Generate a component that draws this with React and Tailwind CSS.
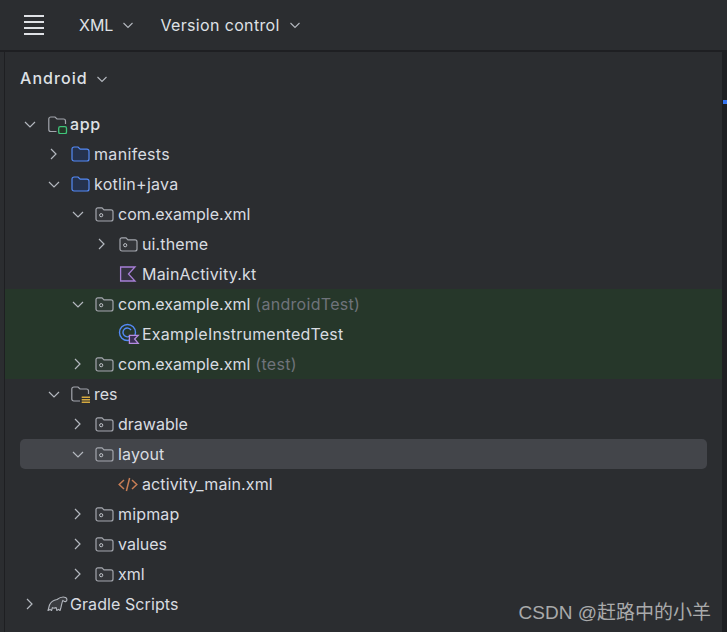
import React from "react";

const Chevron = ({ open }) => (
  <svg width="16" height="16" viewBox="0 0 16 16" fill="none">
    {open ? (
      <path d="M3 6 L8 11 L13 6" stroke="#b4b8bf" strokeWidth="1.2" />
    ) : (
      <path d="M5 3 L10 8 L5 13" stroke="#b4b8bf" strokeWidth="1.2" />
    )}
  </svg>
);

const Small = ({ className = "" }) => (
  <svg width="12" height="12" viewBox="0 0 12 12" fill="none" className={className}>
    <path d="M1.5 4 L6 8.5 L10.5 4" stroke="#b4b8bf" strokeWidth="1.1" />
  </svg>
);

const BlueFolder = () => (
  <svg width="20" height="16" viewBox="0 0 20 16" fill="none">
    <path d="M2 3 A2 2 0 0 1 4 1 H8 L10.2 3.2 H17 A2 2 0 0 1 19 5.2 V13 A2 2 0 0 1 17 15 H4 A2 2 0 0 1 2 13 Z" fill="#25324d" stroke="#548af7" strokeWidth="1.2" />
  </svg>
);

const Pkg = () => (
  <svg width="20" height="16" viewBox="0 0 20 16" fill="none">
    <path d="M2 3.6 A1.8 1.8 0 0 1 3.8 1.8 H8 L10 3.8 H17 A2 2 0 0 1 19 5.8 V13 A2 2 0 0 1 17 15 H4 A2 2 0 0 1 2 13 Z" fill="#43454a" fillOpacity="0.35" stroke="#a3a6ad" strokeWidth="1.2" />
    <circle cx="7.2" cy="9.2" r="1.6" stroke="#c0c3c9" strokeWidth="1" />
  </svg>
);

const AppIcon = () => (
  <svg width="22" height="20" viewBox="0 0 22 20" fill="none">
    <path d="M10.5 17.5 H4.8 A2 2 0 0 1 2.8 15.5 V5 A2 2 0 0 1 4.8 3 H9 L11 5 H17.5 A2 2 0 0 1 19.5 7 V10" stroke="#a3a6ad" strokeWidth="1.2" />
    <rect x="12.7" y="12.7" width="7.8" height="7" rx="1.6" fill="#253627" stroke="#3fc47a" strokeWidth="1.3" />
  </svg>
);

const ResIcon = () => (
  <svg width="22" height="20" viewBox="0 0 22 20" fill="none">
    <path d="M10 17 H3.8 A2 2 0 0 1 1.8 15 V5 A2 2 0 0 1 3.8 3 H8 L10 5 H16.5 A2 2 0 0 1 18.5 7 V10" stroke="#a3a6ad" strokeWidth="1.2" />
    <path d="M11.7 13.3 H20 M11.7 15.8 H20 M11.7 18.3 H20" stroke="#d5a93f" strokeWidth="1.4" />
  </svg>
);

const KotlinFile = () => (
  <svg width="20" height="16" viewBox="0 0 20 16" fill="none">
    <path d="M2.6 1 H17 L10.5 8 L17 15 H2.6 Z" fill="#43395a" fillOpacity="0.4" stroke="#a77fd6" strokeWidth="1.3" />
  </svg>
);

const TestClass = () => (
  <svg width="22" height="22" viewBox="0 0 22 22" fill="none">
    <circle cx="9.5" cy="9.5" r="8" stroke="#548af7" strokeWidth="1.4" />
    <path d="M13 7 A4.4 4.4 0 1 0 12.8 12.2" stroke="#548af7" strokeWidth="1.4" />
    <path d="M11.4 12.4 H20.2 L16.6 16 L20.2 20.4 H11.4 Z" fill="#3b3056" stroke="#b48be0" strokeWidth="1.3" />
  </svg>
);

const XmlIcon = () => (
  <svg width="20" height="16" viewBox="0 0 20 16" fill="none">
    <path d="M6 4 L1.2 8.5 L6 13 M14 4 L18.8 8.5 L14 13 M11.6 2 L8.4 15" stroke="#c77d55" strokeWidth="1.5" />
  </svg>
);

const GradleIcon = () => (
  <svg width="22" height="16" viewBox="0 0 22 16" fill="none">
    <path d="M2 14.5 L3.5 9 C5 5.5 8.5 4 11 3.5 C13 2 17 0.5 19.5 1.5 C21.5 2.5 21.3 5 19.7 5.6 C18.2 6 17.6 4.8 16.8 4.4 C15.8 6.8 15.5 9.5 14.8 12 L14 14.5 L12.4 13.4 L10.8 14.5 L10.2 11.6 C8.6 12.3 7.4 12.2 6.4 11.6 L5.6 14.5 L4 13.4 Z" fill="#3a3c40" stroke="#b4b8bf" strokeWidth="1.1" strokeLinejoin="round" />
  </svg>
);

const rows = [
  { d: 0, c: "open", icon: <AppIcon />, t: "app", cls: "font-medium tracking-[0.6px] text-[#dfe1e5]" },
  { d: 1, c: "closed", icon: <BlueFolder />, t: "manifests", cls: "tracking-[0.33px]" },
  { d: 1, c: "open", icon: <BlueFolder />, t: "kotlin+java", cls: "tracking-[0.27px]" },
  { d: 2, c: "open", icon: <Pkg />, t: "com.example.xml" },
  { d: 3, c: "closed", icon: <Pkg />, t: "ui.theme", cls: "tracking-[0.12px]" },
  { d: 3, icon: <KotlinFile />, t: "MainActivity.kt", cls: "tracking-[0.2px]" },
  { d: 2, c: "open", icon: <Pkg />, t: "com.example.xml", note: "(androidTest)", noteCls: "tracking-[0.3px]", green: true },
  { d: 3, icon: <TestClass />, t: "ExampleInstrumentedTest", cls: "tracking-[0.22px]", green: true },
  { d: 2, c: "closed", icon: <Pkg />, t: "com.example.xml", note: "(test)", noteCls: "tracking-[0.3px]", green: true },
  { d: 1, c: "open", icon: <ResIcon />, t: "res" },
  { d: 2, c: "closed", icon: <Pkg />, t: "drawable" },
  { d: 2, c: "open", icon: <Pkg />, t: "layout", cls: "tracking-[0.15px]", selected: true },
  { d: 3, icon: <XmlIcon />, t: "activity_main.xml", cls: "tracking-[0.12px]" },
  { d: 2, c: "closed", icon: <Pkg />, t: "mipmap", cls: "tracking-[0.15px]" },
  { d: 2, c: "closed", icon: <Pkg />, t: "values" },
  { d: 2, c: "closed", icon: <Pkg />, t: "xml" },
  { d: 0, c: "closed", icon: <GradleIcon />, t: "Gradle Scripts", cls: "tracking-[0.08px]" },
];

const indent = ["pl-[17px]", "pl-[41px]", "pl-[65px]", "pl-[89px]"];

function Row({ r }) {
  return (
    <div className={`h-[30px] ${r.green ? "bg-[#26372a]" : ""}`}>
      <div className={`h-full flex items-center ${r.selected ? "bg-[#43454a] rounded-[5px] mx-[15px] pl-[50px]" : indent[r.d]}`}>
        <span className="w-[24px] shrink-0 flex justify-start">{r.c ? <Chevron open={r.c === "open"} /> : null}</span>
        <span className="w-[24px] h-[18px] shrink-0 flex items-center">{r.icon}</span>
        <span className={`text-[16px] whitespace-nowrap text-[#d9dce1] ${r.cls || ""}`}>{r.t}</span>
        {r.note ? <span className={`text-[16px] ml-[5px] text-[#6f737a] whitespace-nowrap ${r.noteCls}`}>{r.note}</span> : null}
      </div>
    </div>
  );
}

export default function App() {
  return (
    <div className="relative w-[727px] h-[632px] overflow-hidden bg-[#2b2d30] flex flex-col font-['Inter',sans-serif] text-[#dfe1e5]">
      <header className="h-[52px] shrink-0 border-b-2 border-[#1e1f22] flex items-center pl-[24px]">
        <div className="w-[20px] flex flex-col gap-[4px]">
          <span className="h-[2px] bg-[#dfe1e5]" />
          <span className="h-[2px] bg-[#dfe1e5]" />
          <span className="h-[2px] bg-[#dfe1e5]" />
          <span className="h-[2px] bg-[#dfe1e5]" />
        </div>
        <span className="ml-[35px] text-[16px] text-[#dfe1e5]">XML</span>
        <Small className="ml-[9px]" />
        <span className="ml-[26px] text-[16px] tracking-[0.35px] text-[#dfe1e5]">Version control</span>
        <Small className="ml-[9px]" />
      </header>
      <div className="flex-1 flex min-h-0">
        <div className="w-[5px] shrink-0 border-r border-[#1e1f22]" />
        <main className="flex-1 min-w-0 border-r border-[#1e1f22]">
          <div className="h-[57px] pt-[15px] pl-[15px] flex items-start">
            <span className="text-[16px] font-medium tracking-[1.05px] leading-[22px] text-[#dfe1e5]">Android</span>
            <Small className="ml-[8px] mt-[6px]" />
          </div>
          {rows.map((r, i) => (
            <Row key={i} r={r} />
          ))}
        </main>
        <div className="w-[4px] shrink-0 bg-[#1e1f22] pt-[48px]">
          <div className="h-[4px] bg-[#3574f0]" />
        </div>
      </div>
      <div className="absolute right-[16px] bottom-[7px] text-[19px] leading-[24px] text-[#a9aaab] font-['Liberation_Sans','Noto_Sans_CJK_SC',sans-serif] whitespace-nowrap">
        CSDN @赶路中的小羊
      </div>
    </div>
  );
}
